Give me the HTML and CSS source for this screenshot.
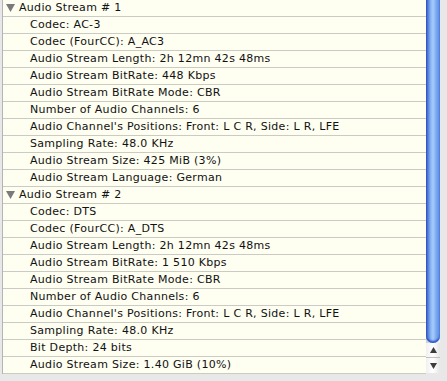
FILE: index.html
```html
<!DOCTYPE html>
<html>
<head>
<meta charset="utf-8">
<link rel="stylesheet" href="styles.css">
</head>
<body>
<div class="window">
  <div class="list">
    <div class="row group"><svg class="tri" width="9" height="8" viewBox="0 0 9 8"><polygon points="0,0 9,0 4.5,8" fill="#7a7a7a"/></svg><span>Audio Stream # 1</span></div>
    <div class="row child">Codec: AC-3</div>
    <div class="row child">Codec (FourCC): A_AC3</div>
    <div class="row child">Audio Stream Length: 2h 12mn 42s 48ms</div>
    <div class="row child">Audio Stream BitRate: 448 Kbps</div>
    <div class="row child">Audio Stream BitRate Mode: CBR</div>
    <div class="row child">Number of Audio Channels: 6</div>
    <div class="row child">Audio Channel's Positions: Front: L C R, Side: L R, LFE</div>
    <div class="row child">Sampling Rate: 48.0 KHz</div>
    <div class="row child">Audio Stream Size: 425 MiB (3%)</div>
    <div class="row child">Audio Stream Language: German</div>
    <div class="row group"><svg class="tri" width="9" height="8" viewBox="0 0 9 8"><polygon points="0,0 9,0 4.5,8" fill="#7a7a7a"/></svg><span>Audio Stream # 2</span></div>
    <div class="row child">Codec: DTS</div>
    <div class="row child">Codec (FourCC): A_DTS</div>
    <div class="row child">Audio Stream Length: 2h 12mn 42s 48ms</div>
    <div class="row child">Audio Stream BitRate: 1 510 Kbps</div>
    <div class="row child">Audio Stream BitRate Mode: CBR</div>
    <div class="row child">Number of Audio Channels: 6</div>
    <div class="row child">Audio Channel's Positions: Front: L C R, Side: L R, LFE</div>
    <div class="row child">Sampling Rate: 48.0 KHz</div>
    <div class="row child">Bit Depth: 24 bits</div>
    <div class="row child">Audio Stream Size: 1.40 GiB (10%)</div>
  </div>
  <div class="scrollbar">
    <div class="track"><div class="thumb"></div></div>
    <div class="btn up"><svg width="7" height="6" viewBox="0 0 7 6"><polygon points="3.5,0 7,6 0,6" fill="#3c3c3c"/></svg></div>
    <div class="btn down"><svg width="7" height="6" viewBox="0 0 7 6"><polygon points="0,0 7,0 3.5,6" fill="#3c3c3c"/></svg></div>
  </div>
</div>
</body>
</html>
```
FILE: styles.css
```css
html, body {
  margin: 0;
  padding: 0;
  background: #e8e8e8;
}
.window {
  display: flex;
  align-items: flex-start;
  width: 447px;
  height: 381px;
  overflow: hidden;
}
.list {
  margin-left: 2px;
  width: 423px;
  border-left: 1px solid #b4b4b4;
  background: #fefef1;
  font-family: "DejaVu Sans", sans-serif;
  font-size: 11px;
  letter-spacing: 0.3px;
  color: #111;
}
.row {
  height: 16px;
  line-height: 16px;
  border-bottom: 1px solid #cbcbc6;
  white-space: nowrap;
  overflow: hidden;
}
.group {
  display: flex;
  align-items: center;
  padding-left: 3px;
}
.tri {
  display: block;
  margin-right: 4px;
  margin-top: -1px;
}
.child {
  padding-left: 27px;
}
.scrollbar {
  width: 14px;
  height: 373px;
  display: flex;
  flex-direction: column;
  background: linear-gradient(to right, #d8d8d8, #f8f8f8 50%, #e4e4e4);
}
.track {
  flex: 0 0 343px;
  background: linear-gradient(to right, #cfcfcf, #f4f4f4);
}
.thumb {
  height: 343px;
  border-radius: 0 0 7px 7px;
  background: linear-gradient(to right, #2f4fb8 0, #4f78d8 12%, #8db8f4 35%, #a8ccfa 50%, #78a6ee 75%, #5c8ee6 100%);
  box-shadow: inset 0 -2px 2px #2a56c4;
}
.btn {
  display: flex;
  align-items: center;
  justify-content: center;
  background: linear-gradient(to right, #f0f0f0, #ffffff 50%, #e6e6e6);
}
.btn.up {
  height: 14px;
  border-bottom: 1px solid #c0c0c0;
}
.btn.down {
  height: 15px;
}
```
